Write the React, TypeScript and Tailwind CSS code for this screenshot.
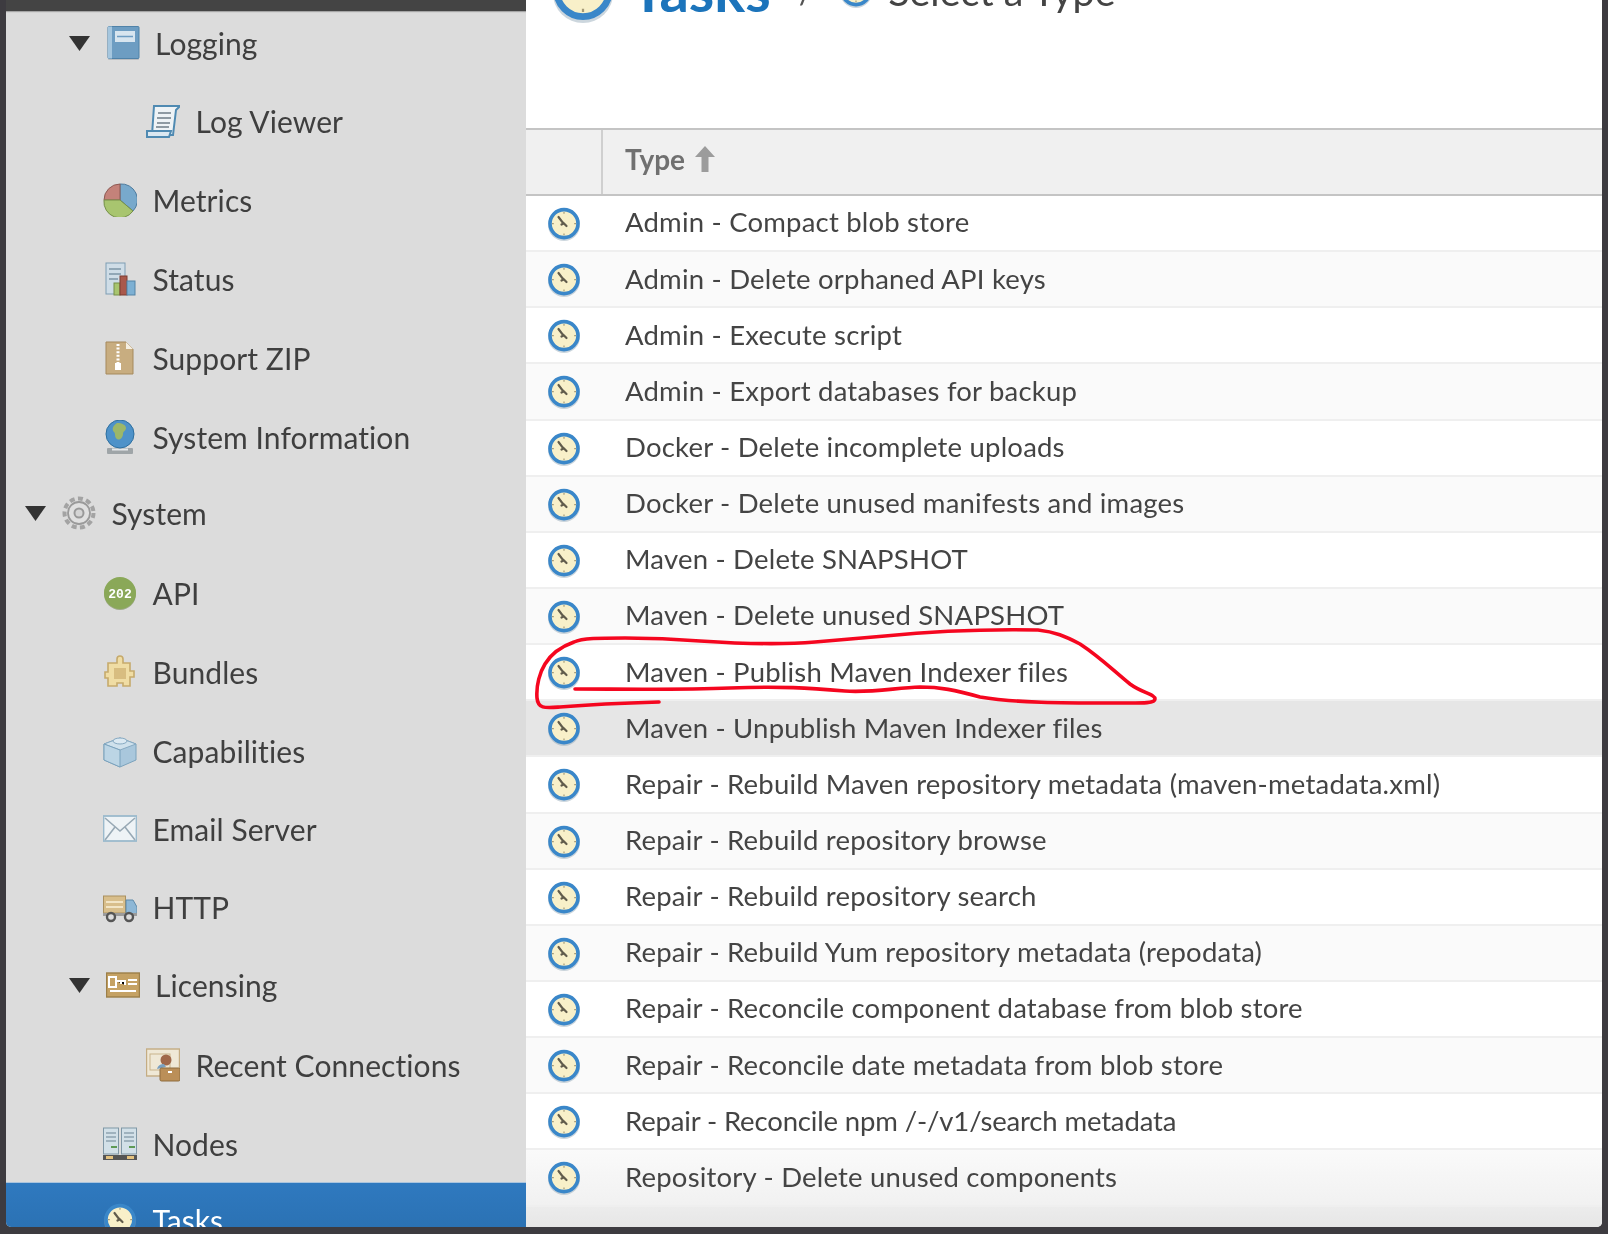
import React from "react";

const FONT = "font-['Lato','Noto_Sans',sans-serif]";

function Clock({ size = 34 }: { size?: number }) {
  return (
    <svg width={size} height={size} viewBox="0 0 34 34" className="shrink-0">
      <circle cx="17" cy="18" r="16" fill="#8fa3b3" opacity="0.45" />
      <circle cx="17" cy="16.6" r="14" fill="#f8f0c9" stroke="#3a87c9" strokeWidth="3.6" />
      <path d="M17 5v1.8M17 26.4v1.8M5 16.6h1.8M27.2 16.6h1.8" stroke="#a59a78" strokeWidth="1.2" />
      <path d="M11.5 10 L16.5 16.5 L14.5 17.5 M16.5 16 L19.5 19" fill="none" stroke="#615c4c" strokeWidth="2.2" strokeLinecap="round" />
    </svg>
  );
}

function Tri() {
  return (
    <svg width="21" height="15" viewBox="0 0 21 15" className="shrink-0">
      <path d="M0 0H21L10.5 15Z" fill="#333" />
    </svg>
  );
}

const I = ({ children }: { children: React.ReactNode }) => (
  <svg width="34" height="34" viewBox="0 0 34 34" className="shrink-0">
    {children}
  </svg>
);

const icons: Record<string, React.ReactNode> = {
  book: (
    <I>
      <rect x="2" y="2" width="31" height="32" fill="#a3a9ad" opacity=".6" rx="1" />
      <rect x="2" y="0.5" width="31" height="32" fill="#6d9dc2" stroke="#4f82a8" rx="1" />
      <rect x="2" y="0.5" width="4" height="32" fill="#a5c6de" />
      <rect x="9" y="5" width="20" height="11" fill="#d7e5ef" />
      <path d="M11 10.5h16" stroke="#6d9dc2" strokeWidth="1.6" />
    </I>
  ),
  scroll: (
    <I>
      <path d="M8 2H34L30 6 27 31H6L8 2Z" fill="#eef3f6" stroke="#4f8ab2" strokeWidth="2" />
      <path d="M1 27H25L23 33H1Z" fill="#dbe8f1" stroke="#4f8ab2" strokeWidth="2" />
      <path d="M12 9h13M11 14h14M11 19h13M10 23h13" stroke="#8e9aa3" strokeWidth="2" />
    </I>
  ),
  pie: (
    <I>
      <circle cx="17" cy="17.8" r="16" fill="#8a9a76" />
      <path d="M17 17 V1 A16 16 0 0 1 30 28 Z" fill="#78a9cc" stroke="#4f7c9e" />
      <path d="M17 17 V1 A16 16 0 0 0 1 17 Z" fill="#c4827a" stroke="#8e5a54" />
      <path d="M17 17 L30 28 A16 16 0 0 1 1 17 Z" fill="#a8c56f" stroke="#76904b" />
    </I>
  ),
  status: (
    <I>
      <rect x="3" y="1" width="19" height="31" fill="#cfdde7" stroke="#7e9db3" />
      <path d="M6 7h12M6 12h12M6 17h9" stroke="#91a7b6" strokeWidth="1.8" />
      <rect x="11" y="21" width="6" height="12" fill="#a8c56f" stroke="#76904b" />
      <rect x="17" y="14" width="7" height="19" fill="#a9584b" stroke="#7d3c32" />
      <rect x="24" y="19" width="8" height="14" fill="#7db0d3" stroke="#5584a6" />
    </I>
  ),
  zip: (
    <I>
      <path d="M3 1H23L30 8V33H3Z" fill="#c8ad80" stroke="#a5895c" />
      <path d="M23 1V8H30Z" fill="#f5efe2" />
      <path d="M15 3V22" stroke="#fff" strokeWidth="3" strokeDasharray="2 1.6" />
      <rect x="12" y="22" width="6" height="7" fill="#fff" />
    </I>
  ),
  globe: (
    <I>
      <rect x="4" y="28" width="26" height="6" fill="#9fa5a8" rx="1" />
      <path d="M9 29.5h16" stroke="#e5e8ea" strokeWidth="2" />
      <circle cx="17" cy="14" r="14" fill="#4e92c9" stroke="#2e6f9f" />
      <path d="M14 3c5 0 9 2 9 5s-3 3-3 6-3 7-6 5-1-5-3-7-2-6 3-9Z" fill="#9cb769" />
    </I>
  ),
  gear: (
    <I>
      <circle cx="17" cy="17" r="14.5" fill="none" stroke="#a3a3a3" strokeWidth="4" strokeDasharray="5 3.35" />
      <circle cx="17" cy="17" r="11" fill="#e0e0e0" stroke="#9a9a9a" strokeWidth="1.8" />
      <circle cx="17" cy="17" r="4.5" fill="#d5d5d5" stroke="#999" strokeWidth="2" />
    </I>
  ),
  api: (
    <I>
      <circle cx="17" cy="18" r="16" fill="#75894f" opacity=".6" />
      <circle cx="17" cy="17" r="16" fill="#8aa858" />
      <text x="17" y="22" textAnchor="middle" fontFamily="Liberation Mono" fontWeight="700" fontSize="13" fill="#fff">202</text>
    </I>
  ),
  puzzle: (
    <I>
      <path d="M12 8H14V4a3 3 0 0 1 6 0V8h7v8h4v6h-4v9H20v-3h-6v3H5v-8H2v-6h3V8Z" fill="#f0dda4" stroke="#c6aa6c" strokeWidth="1.6" />
      <rect x="11" y="13" width="12" height="11" fill="#d8bd80" />
    </I>
  ),
  cube: (
    <I>
      <path d="M1 10 17 4 33 10V26L17 33 1 26Z" fill="#a9c7dc" stroke="#7ba2bc" />
      <path d="M1 10 17 16 33 10 17 4Z" fill="#cfe1ec" stroke="#87aac2" />
      <path d="M1 10 17 16V33L1 26Z" fill="#bcd5e5" stroke="#7ba2bc" />
      <ellipse cx="17" cy="7" rx="7" ry="3" fill="#dbe9f2" stroke="#87aac2" />
    </I>
  ),
  mail: (
    <I>
      <rect x="0.5" y="4" width="33" height="25" fill="#eef3f6" stroke="#9bbacd" strokeWidth="1.8" />
      <path d="M2 6 17 19 32 6M2 28 12 15M32 28 22 15" fill="none" stroke="#98a9b5" strokeWidth="1.6" />
    </I>
  ),
  truck: (
    <I>
      <rect x="0.5" y="6" width="22" height="17" fill="#d8be8b" stroke="#a9905f" />
      <path d="M3 12h17M3 17h17" stroke="#f2e5c6" strokeWidth="2" />
      <path d="M23 10h7l4 7v7H23Z" fill="#8db7d6" stroke="#5f8aa9" />
      <rect x="0" y="23" width="34" height="3" fill="#9b9b9b" />
      <circle cx="8" cy="27" r="4" fill="#dcdcdc" stroke="#555" strokeWidth="2.4" />
      <circle cx="26" cy="27" r="4" fill="#dcdcdc" stroke="#555" strokeWidth="2.4" />
    </I>
  ),
  lic: (
    <I>
      <rect x="0.5" y="5" width="33" height="24" fill="#c5a264" stroke="#9c7f48" strokeWidth="1.4" />
      <rect x="3" y="9" width="7" height="10" fill="none" stroke="#fff" strokeWidth="2" />
      <path d="M10 13h9v4M15 13v3M22 12h9M22 16h9M4 23h26" stroke="#fff" strokeWidth="2" />
    </I>
  ),
  recent: (
    <I>
      <rect x="0.5" y="1" width="33" height="27" fill="#efe8d6" stroke="#c4ac82" strokeWidth="1.4" />
      <rect x="4" y="6" width="20" height="16" fill="none" stroke="#c9b48c" />
      <circle cx="20" cy="12" r="5.5" fill="#a0684a" />
      <path d="M11 21c1-4 4-5 7-5l2 3" fill="#7aa0c0" />
      <rect x="14" y="20" width="20" height="13" fill="#bb8f58" stroke="#8f6c3f" rx="1.5" />
      <path d="M22 24h4" stroke="#fff" strokeWidth="2" />
    </I>
  ),
  nodes: (
    <I>
      <rect x="0.5" y="1" width="15" height="26" fill="#d2e0e8" stroke="#7f97a6" />
      <rect x="18.5" y="1" width="15" height="26" fill="#d2e0e8" stroke="#7f97a6" />
      <path d="M3 6h10M3 10h10M3 14h10M21 6h10M21 10h10M21 14h10" stroke="#8ea3b0" strokeWidth="1.6" />
      <path d="M8 20h6M26 20h6" stroke="#5e9a56" strokeWidth="2" />
      <rect x="0" y="28" width="34" height="5" fill="#555" />
      <path d="M3 30.5h7M24 30.5h7" stroke="#e4c27f" strokeWidth="3" />
    </I>
  ),
};

type Item = { label: string; icon: string; kind: "root" | "parent" | "leaf" | "child"; cls: string };

const nav: Item[] = [
  { label: "Logging", icon: "book", kind: "parent", cls: "mt-[17px]" },
  { label: "Log Viewer", icon: "scroll", kind: "child", cls: "mt-[48px]" },
  { label: "Metrics", icon: "pie", kind: "leaf", cls: "mt-[49px]" },
  { label: "Status", icon: "status", kind: "leaf", cls: "mt-[49px]" },
  { label: "Support ZIP", icon: "zip", kind: "leaf", cls: "mt-[49px]" },
  { label: "System Information", icon: "globe", kind: "leaf", cls: "mt-[49px]" },
  { label: "System", icon: "gear", kind: "root", cls: "mt-[46px]" },
  { label: "API", icon: "api", kind: "leaf", cls: "mt-[50px]" },
  { label: "Bundles", icon: "puzzle", kind: "leaf", cls: "mt-[49px]" },
  { label: "Capabilities", icon: "cube", kind: "leaf", cls: "mt-[49px]" },
  { label: "Email Server", icon: "mail", kind: "leaf", cls: "mt-[48px]" },
  { label: "HTTP", icon: "truck", kind: "leaf", cls: "mt-[48px]" },
  { label: "Licensing", icon: "lic", kind: "parent", cls: "mt-[48px]" },
  { label: "Recent Connections", icon: "recent", kind: "child", cls: "mt-[50px]" },
  { label: "Nodes", icon: "nodes", kind: "leaf", cls: "mt-[49px]" },
];

const kindCls = {
  root: "pl-[19px]",
  parent: "pl-[63px]",
  leaf: "pl-[97px]",
  child: "pl-[140px]",
};

function NavRow({ item }: { item: Item }) {
  const hasTri = item.kind === "root" || item.kind === "parent";
  return (
    <div className={`flex h-[30px] items-center ${kindCls[item.kind]} ${item.cls}`}>
      {hasTri && (
        <span className="mr-[16px] flex w-[21px] shrink-0">
          <Tri />
        </span>
      )}
      <span className={`flex w-[34px] shrink-0 ${item.kind === "parent" ? "mr-[15px]" : "mr-[15.5px]"}`}>{icons[item.icon]}</span>
      <span className="text-[30px] leading-[30px] tracking-[0.08px] whitespace-nowrap text-[#3f3f3f]">{item.label}</span>
    </div>
  );
}

const rows = [
  "Admin - Compact blob store",
  "Admin - Delete orphaned API keys",
  "Admin - Execute script",
  "Admin - Export databases for backup",
  "Docker - Delete incomplete uploads",
  "Docker - Delete unused manifests and images",
  "Maven - Delete SNAPSHOT",
  "Maven - Delete unused SNAPSHOT",
  "Maven - Publish Maven Indexer files",
  "Maven - Unpublish Maven Indexer files",
  "Repair - Rebuild Maven repository metadata (maven-metadata.xml)",
  "Repair - Rebuild repository browse",
  "Repair - Rebuild repository search",
  "Repair - Rebuild Yum repository metadata (repodata)",
  "Repair - Reconcile component database from blob store",
  "Repair - Reconcile date metadata from blob store",
  "Repair - Reconcile npm /-/v1/search metadata",
  "Repository - Delete unused components",
];

function rowBg(i: number) {
  if (i === 9) return "bg-[#e6e6e6]";
  if (i === 17) return "bg-gradient-to-b from-[#fafafa] to-[#f1f1f1]";
  return i % 2 === 1 ? "bg-[#fafafa]" : "bg-white";
}

export default function App() {
  return (
    <div className={`relative flex h-[1234px] w-[1608px] overflow-hidden bg-[#3d3b40] pr-[6px] pb-[7px] pl-[6px] blur-[0.5px] ${FONT}`}>
      <div className="flex h-full w-full overflow-hidden rounded-b-[5px]">
        {/* sidebar */}
        <aside className="flex w-[520px] shrink-0 flex-col overflow-hidden bg-[#dcdcdc]">
          <div className="relative z-10 h-[11px] shrink-0 bg-[#444444] shadow-[0_1px_1px_rgba(0,0,0,0.25)]" />
          <nav className="flex h-[1171px] shrink-0 flex-col overflow-hidden">
            {nav.map((n) => (
              <NavRow key={n.label} item={n} />
            ))}
          </nav>
          <div className="h-[45px] shrink-0 overflow-hidden border-t border-[#a9c4de] bg-gradient-to-b from-[#2f79bf] to-[#2b72b4] pt-[22px] pl-[97px]">
            <div className="flex h-[30px] items-center">
              <span className="mr-[15.5px] flex w-[34px]">
                <Clock />
              </span>
              <span className="text-[30px] leading-[30px] text-white">Tasks</span>
            </div>
          </div>
        </aside>

        {/* main */}
        <main className="flex min-w-0 flex-1 flex-col overflow-hidden bg-white">
          <div className="h-[128px] shrink-0 overflow-hidden">
            <div className="-mt-[41px] flex h-[64px] items-center pl-[25px]">
              <Clock size={64} />
              <span className="ml-[16px] pb-[3px] text-[58px] leading-none font-bold text-[#1c74bb]">Tasks</span>
              <span className="ml-[28px] text-[34px] leading-none text-[#555]">/</span>
              <span className="ml-[25px] flex">
                <Clock size={34} />
              </span>
              <span className="ml-[15px] text-[39.5px] leading-none text-[#444]">Select a Type</span>
            </div>
          </div>

          <div className="flex h-[68px] shrink-0 border-y-2 border-[#c4c4c4] bg-[#f0f0f0]">
            <div className="w-[77px] shrink-0 border-r-2 border-[#cfcfcf]" />
            <div className="flex items-center pb-[7px] pl-[22px] text-[28px] font-bold text-[#707070]">
              Type
              <svg width="22" height="26" viewBox="0 0 22 26" className="ml-[9px]">
                <path d="M11 0 21 11H14.5V26H7.5V11H1Z" fill="#9c9c9c" />
              </svg>
            </div>
          </div>

          <div className="flex flex-col">
            {rows.map((r, i) => (
              <div
                key={r}
                className={`flex h-[56.15px] shrink-0 items-center border-b-2 border-[#efefef] text-[27.5px] whitespace-nowrap text-[#444] ${
                  i === 16 ? "tracking-[-0.15px]" : "tracking-[0.2px]"
                } ${rowBg(i)}`}
              >
                <span className="mt-[2px] flex w-[77px] shrink-0 pl-[21px]">
                  <Clock />
                </span>
                <span className="pb-[2px] pl-[22px]">{r}</span>
              </div>
            ))}
          </div>
          <div className="flex-1 bg-gradient-to-b from-[#ececec] to-[#e6e6e6]" />
        </main>
      </div>

      {/* red hand-drawn annotation over the table */}
      <svg width="1608" height="1234" viewBox="0 0 1608 1234" className="pointer-events-none absolute top-0 left-0">
        <path
          d="M659 702C625 703 585 705 560 707C545 708 538 709 537 698C536 685 540 672 545 664C551 654 560 647 574 642C582 638 600 638 625 638C650 638 675 639 700 641C745 644 780 645 815 642C840 640 860 638 885 636C925 632 985 629 1038 630C1055 632 1065 636 1080 644C1100 657 1115 672 1130 684C1142 693 1155 694 1155 699C1155 704 1140 703 1110 703C1065 703 1015 703 980 697C955 690 940 687 920 687C895 688 870 693 845 691C810 688 780 686 730 688C680 690 620 689 575 689"
          fill="none"
          stroke="#f5061f"
          strokeWidth="3.6"
          strokeLinecap="round"
          strokeLinejoin="round"
        />
      </svg>
    </div>
  );
}
